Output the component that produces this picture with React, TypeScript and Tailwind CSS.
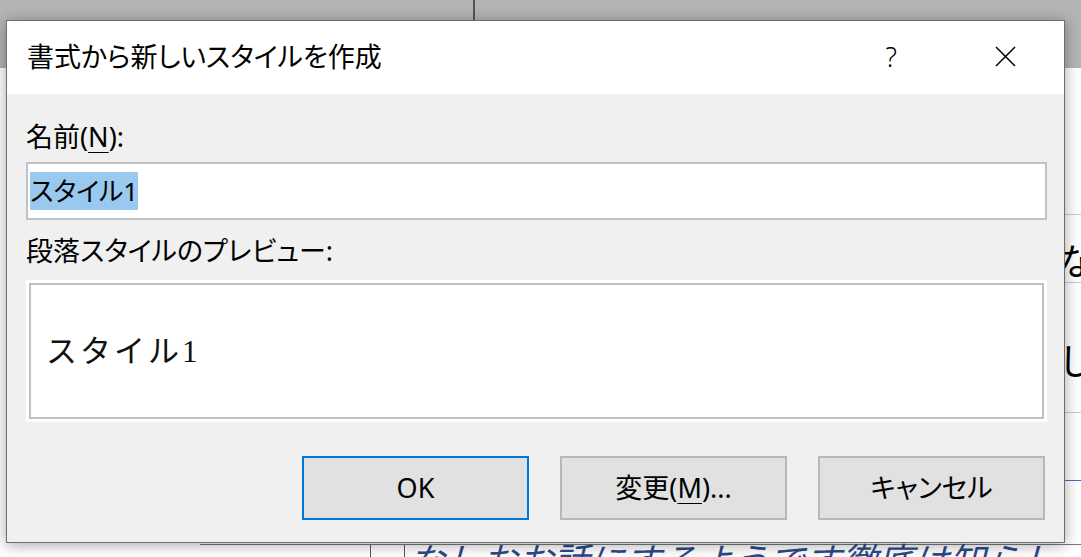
import React from "react";

const ui = "[font-family:'Noto_Sans','Noto_Sans_CJK_JP',sans-serif] [font-feature-settings:'palt']";

function CloseIcon() {
  return (
    <svg width="21" height="21" viewBox="0 0 21 21" fill="none">
      <path d="M1 1L20 20M20 1L1 20" stroke="#000" strokeWidth="1.5" />
    </svg>
  );
}

function DialogButton({ children, primary }: { children: React.ReactNode; primary?: boolean }) {
  return (
    <button
      className={
        primary
          ? "w-[227px] h-[64px] bg-[#e1e1e1] border-2 border-[#0078d7] text-[27px] text-black flex items-center justify-center"
          : "w-[227px] h-[64px] bg-[#e1e1e1] border-2 border-[#b8b8b8] text-[27px] text-black flex items-center justify-center"
      }
    >
      {children}
    </button>
  );
}

function NewStyleDialog() {
  return (
    <div className={`absolute left-[6px] top-[20px] w-[1059px] h-[523px] border border-[#6e6e6e] bg-[#f0f0f0] shadow-[0_2px_14px_rgba(0,0,0,0.35)] flex flex-col ${ui}`}>
      <div className="h-[73px] bg-white flex items-center pl-[20px] pr-[48px] shrink-0">
        <span className="text-[27px] leading-none text-black -mt-[2px]">書式から新しいスタイルを作成</span>
        <span className="ml-auto text-[27px] font-light leading-none text-black -mt-[2px]">?</span>
        <span className="ml-[98px] -mt-[2px]">
          <CloseIcon />
        </span>
      </div>

      <div className="flex flex-col pl-[19px] pr-[17px] pt-[24px] text-black">
        <div className="h-[36px] flex items-center text-[27px] leading-none">
          名前(<u className="underline-offset-[5px] decoration-1">N</u>):
        </div>
        <div className="mt-[8px] h-[58px] bg-white border-2 border-[#c2c2c6] flex items-center pl-[2px]">
          <span className="bg-[#99c9ef] text-[26px] leading-[38px] h-[38px]">スタイル1</span>
        </div>
        <div className="mt-[12px] h-[36px] flex items-center text-[27px] leading-none">
          段落スタイルのプレビュー:
        </div>
        <div className="mt-[12px] h-[142px] bg-white p-[3px]">
          <div className="h-full border-2 border-[#c0c0c0] flex items-center pl-[15px]">
            <span className="[font-family:'Liberation_Serif','Noto_Sans_CJK_JP',serif] [font-feature-settings:normal] text-[31px] tracking-[3px] text-[#111] mt-[2px]">
              スタイル1
            </span>
          </div>
        </div>
        <div className="mt-[34px] flex justify-end gap-[31px] mr-[2px]">
          <DialogButton primary>OK</DialogButton>
          <DialogButton>
            変更(<u className="underline-offset-[5px] decoration-1">M</u>)...
          </DialogButton>
          <DialogButton>キャンセル</DialogButton>
        </div>
      </div>
    </div>
  );
}

export default function App() {
  return (
    <div className="relative w-[1081px] h-[557px] overflow-hidden bg-white">
      <div className="h-[68px] bg-[#b4b4b4]">
        <div className="ml-[473px] w-[2px] h-[20px] bg-[#555]" />
      </div>

      <div className="flex flex-col [font-family:'Noto_Sans_CJK_JP',sans-serif] text-black">
        <div className="h-[147px] ml-[1000px] border-b border-[#c8c8c8]" />
        <div className="h-[68px] border-b border-[#c8c8c8] ml-[1000px] pl-[58px] pt-[26px] text-[36px] leading-none whitespace-nowrap">
          な
        </div>
        <div className="h-[130px] border-b border-[#c8c8c8] ml-[1000px] pl-[58px] pt-[58px] text-[36px] leading-none whitespace-nowrap">
          し
        </div>
        <div className="h-[68px] ml-[1000px] border-b border-[#4a6fb5]" />
        <div className="h-[64px] ml-[200px] border-b border-[#7a7a7a]" />
        <div className="flex h-[12px]">
          <div className="ml-[370px] w-px bg-[#555]" />
          <div className="ml-[33px] w-px bg-[#555]" />
          <div className="ml-[4px] text-[36px] leading-none italic text-[#2c4a8a] whitespace-nowrap -mt-[5px]">
            なしおお話にするようです徹底は知らし
          </div>
        </div>
      </div>

      <NewStyleDialog />
    </div>
  );
}
